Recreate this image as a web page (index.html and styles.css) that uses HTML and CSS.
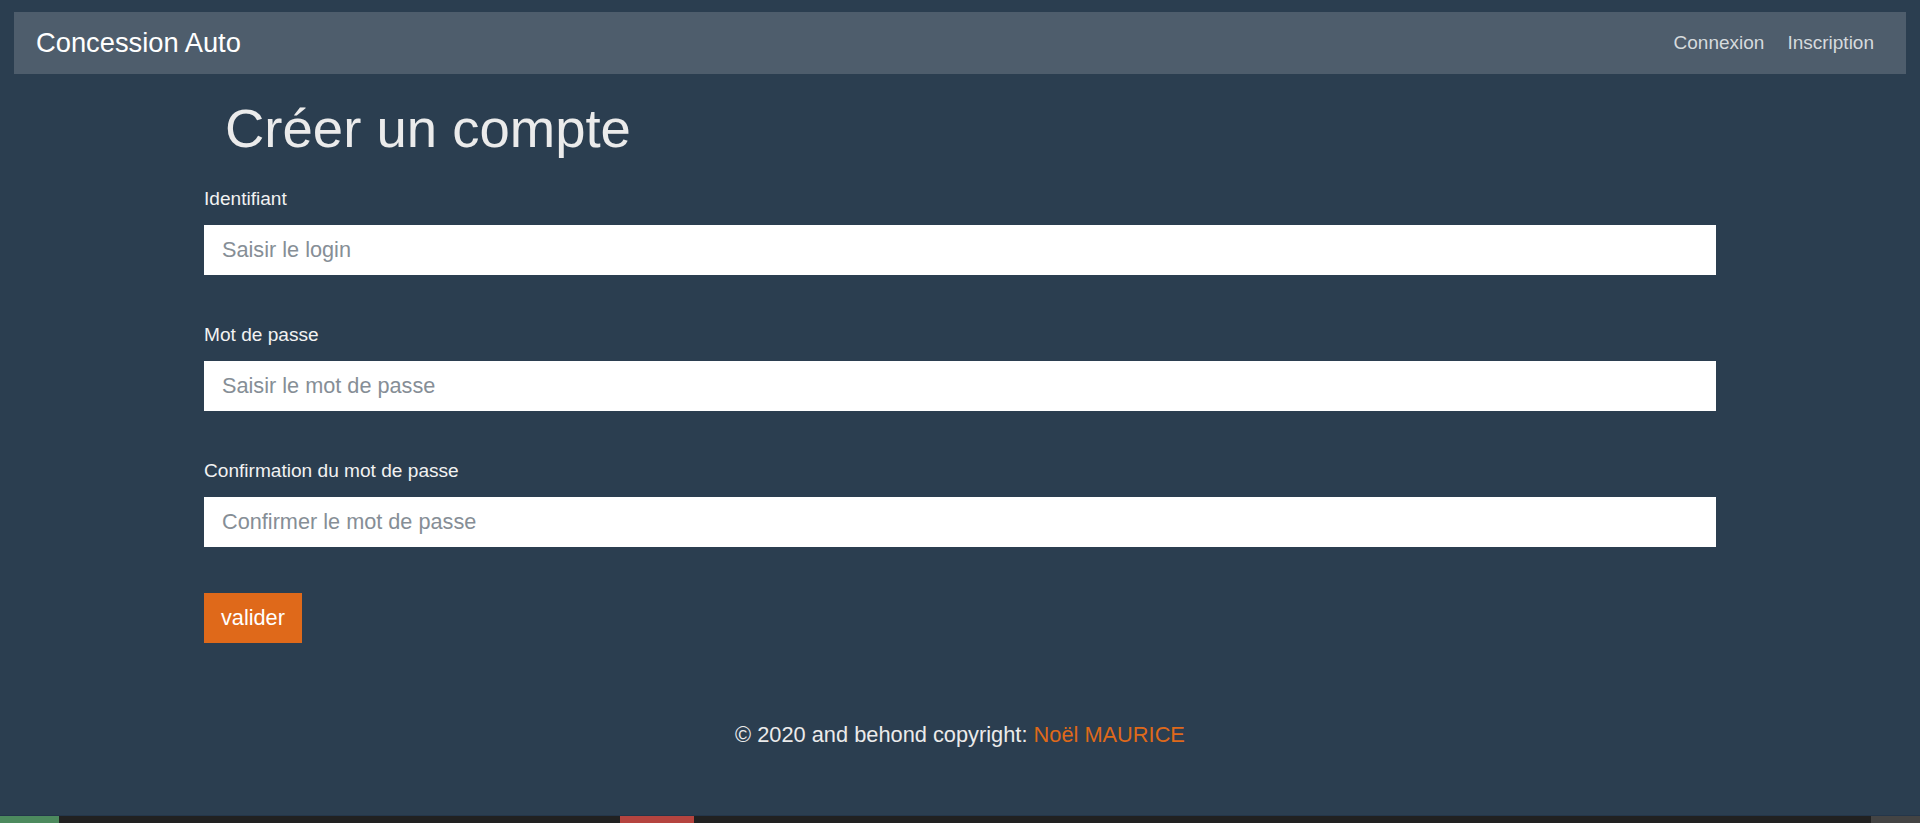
FILE: index.html
```html
<!DOCTYPE html>
<html lang="fr">
<head>
<meta charset="utf-8">
<title>Concession Auto - Créer un compte</title>
<link rel="stylesheet" href="styles.css">
</head>
<body class="app">
  <div class="shell">
    <nav class="navbar">
      <a class="brand" href="#">Concession Auto</a>
      <ul class="nav-links">
        <li><a href="#">Connexion</a></li>
        <li><a href="#">Inscription</a></li>
      </ul>
    </nav>

    <main class="container">
      <h1 class="title">Créer un compte</h1>
      <form class="form">
        <div class="form-group">
          <label class="label" for="login">Identifiant</label>
          <input class="input" id="login" type="text" placeholder="Saisir le login">
        </div>
        <div class="form-group">
          <label class="label" for="pwd">Mot de passe</label>
          <input class="input" id="pwd" type="password" placeholder="Saisir le mot de passe">
        </div>
        <div class="form-group">
          <label class="label" for="pwd2">Confirmation du mot de passe</label>
          <input class="input" id="pwd2" type="password" placeholder="Confirmer le mot de passe">
        </div>
        <button class="btn" type="submit">valider</button>
      </form>
    </main>

    <footer class="footer">
      © 2020 and behond copyright: <a class="footer-link" href="#">Noël MAURICE</a>
    </footer>
  </div>

  <div class="statusbar">
    <span class="seg seg-green"></span>
    <span class="seg seg-gap1"></span>
    <span class="seg seg-red"></span>
    <span class="seg seg-fill"></span>
    <span class="seg seg-grey"></span>
  </div>
</body>
</html>
```

FILE: styles.css
```css
* {
  box-sizing: border-box;
}

html, body {
  margin: 0;
  padding: 0;
}

.app {
  min-height: 100vh;
  display: flex;
  flex-direction: column;
  background: #2b3e50;
  color: #ebebeb;
  font-family: "Liberation Sans", Arial, sans-serif;
}

.shell {
  padding: 12px 14px 0;
}

.navbar {
  height: 62px;
  background: #4e5d6c;
  display: flex;
  align-items: center;
  justify-content: space-between;
  padding: 0 32px 0 22px;
}

.brand {
  color: #ffffff;
  text-decoration: none;
  font-size: 27.3px;
  line-height: 1;
}

.nav-links {
  list-style: none;
  margin: 0;
  padding: 0;
  display: flex;
  gap: 23px;
}

.nav-links a {
  color: #d6dadd;
  text-decoration: none;
  font-size: 19px;
  line-height: 1;
}

.container {
  width: 1512px;
  margin: 0 auto;
}

.title {
  margin: 25px 0 0 21px;
  font-size: 54.5px;
  line-height: 59px;
  font-weight: 400;
  color: #ebebeb;
}

.form {
  margin-top: 27px;
}

.form-group {
  margin-bottom: 46px;
}

.label {
  display: block;
  font-size: 19.1px;
  line-height: 28px;
  margin-bottom: 12px;
  color: #f2f2f2;
}

.input {
  display: block;
  width: 100%;
  height: 50px;
  border: 0;
  border-radius: 0;
  background: #ffffff;
  padding: 0 18px;
  font-family: "Liberation Sans", Arial, sans-serif;
  font-size: 21.7px;
  color: #495057;
  outline: none;
}

.input::placeholder {
  color: #868e96;
  opacity: 1;
}

.btn {
  display: block;
  height: 50px;
  padding: 0 17px;
  border: 0;
  border-radius: 0;
  background: #df691a;
  color: #ffffff;
  font-family: "Liberation Sans", Arial, sans-serif;
  font-size: 21.7px;
  cursor: pointer;
}

.footer {
  margin-top: 76px;
  text-align: center;
  font-size: 21.8px;
  line-height: 32px;
  color: #ebebeb;
}

.footer-link {
  color: #df691a;
  text-decoration: none;
}

.statusbar {
  margin-top: auto;
  height: 8px;
  display: flex;
  border-top: 1px solid #24364a;
  background: #212121;
}

.seg {
  display: block;
  height: 100%;
}

.seg-green {
  width: 59px;
  background: #4d8a5e;
}

.seg-gap1 {
  width: 561px;
}

.seg-red {
  width: 74px;
  background: #b5443f;
}

.seg-fill {
  flex: 1;
}

.seg-grey {
  width: 49px;
  background: #444444;
}
```
